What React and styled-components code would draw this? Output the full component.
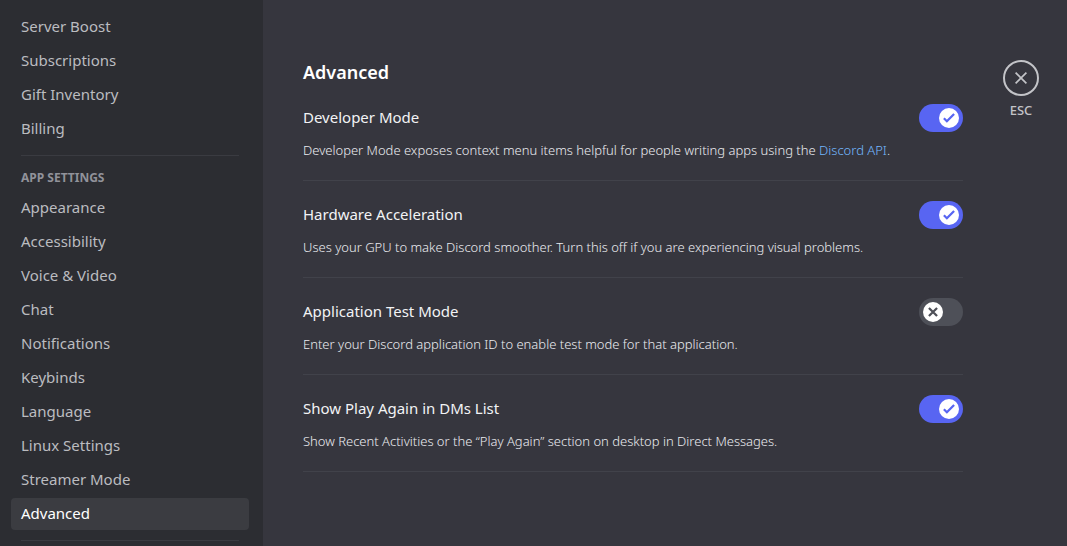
import { useState } from "react";
import styled, { createGlobalStyle } from "styled-components";

const GlobalStyle = createGlobalStyle`
  *,
  *::before,
  *::after {
    box-sizing: border-box;
  }

  body {
    margin: 0;
    background: #36363e;
    color: #f2f3f5;
    font-family: "Noto Sans", sans-serif;
    font-size: 15px;
    line-height: 20px;
  }
`;

const StyledSettings = styled.div`
  display: flex;
  min-height: 100vh;
`;

const Sidebar = styled.nav`
  flex: 0 0 263px;
  padding: 11px 14px 0 11px;
  background: #2c2d32;
`;

const NavList = styled.ul`
  display: flex;
  flex-direction: column;
  gap: 2px;
  margin: 0;
  padding: 0;
  list-style: none;
`;

const NavLink = styled.a`
  display: block;
  padding: 5px 10px 7px;
  border-radius: 4px;
  background: ${(props) => (props.$active ? "#3b3c41" : "transparent")};
  color: ${(props) => (props.$active ? "#ffffff" : "#bbbcc0")};
  text-decoration: none;
`;

const NavSeparator = styled.hr`
  height: 1px;
  margin: 10px 10px 0;
  border: 0;
  background: #3a3b41;
`;

const NavHeading = styled.h2`
  margin: 0;
  padding: 14px 10px 6px;
  color: #91929a;
  font-size: 12px;
  font-weight: 700;
  line-height: 16px;
  text-transform: uppercase;
`;

const Content = styled.main`
  display: flex;
  flex: 1;
  gap: 40px;
  align-items: flex-start;
  padding: 60px 28px 40px 40px;
`;

const Column = styled.section`
  flex: 1;
  min-width: 0;
  max-width: 740px;
`;

const Title = styled.h1`
  margin: 0 0 20px;
  color: #ffffff;
  font-size: 18px;
  font-weight: 600;
  line-height: 24px;
`;

const StyledSetting = styled.div`
  margin-bottom: 20px;
  border-bottom: 1px solid #41424a;
`;

const SettingRow = styled.div`
  display: flex;
  align-items: flex-start;
  justify-content: space-between;
`;

const SettingLabel = styled.label`
  line-height: 26px;
`;

const Note = styled.p`
  margin: 0;
  padding: 8px 0 20px;
  color: #ebecf0;
  font-size: 13px;
  font-weight: 300;
`;

const NoteLink = styled.a`
  color: #74b8ff;
  text-decoration: none;
`;

const Track = styled.span`
  position: relative;
  display: flex;
  flex: none;
  justify-content: ${(props) => (props.$on ? "flex-end" : "flex-start")};
  width: 44px;
  height: 28px;
  padding: 4px;
  border-radius: 14px;
  background: ${(props) => (props.$on ? "#5865f2" : "#4e5058")};
`;

const SwitchInput = styled.input`
  position: absolute;
  inset: 0;
  width: 100%;
  height: 100%;
  margin: 0;
  opacity: 0;
  cursor: pointer;
`;

const Knob = styled.svg`
  width: 20px;
  height: 20px;
  border-radius: 10px;
  background: #ffffff;
  color: ${(props) => (props.$on ? "#5865f2" : "#4e5058")};
`;

const CloseButton = styled.button`
  display: flex;
  flex: none;
  flex-direction: column;
  gap: 6px;
  align-items: center;
  width: 36px;
  padding: 0;
  border: 0;
  background: none;
  color: #c3c4c8;
  font: inherit;
  font-size: 13px;
  font-weight: 500;
  line-height: 16px;
  cursor: pointer;
`;

const CloseCircle = styled.span`
  display: grid;
  place-items: center;
  width: 36px;
  height: 36px;
  border: 2px solid currentColor;
  border-radius: 50%;
`;

const accountLinks = ["Server Boost", "Subscriptions", "Gift Inventory", "Billing"];

const appLinks = [
  "Appearance",
  "Accessibility",
  "Voice & Video",
  "Chat",
  "Notifications",
  "Keybinds",
  "Language",
  "Linux Settings",
  "Streamer Mode",
  "Advanced",
];

const settings = [
  {
    id: "developer-mode",
    label: "Developer Mode",
    note: (
      <>
        Developer Mode exposes context menu items helpful for people writing
        apps using the <NoteLink href="#api">Discord API</NoteLink>.
      </>
    ),
    enabled: true,
  },
  {
    id: "hardware-acceleration",
    label: "Hardware Acceleration",
    note: "Uses your GPU to make Discord smoother. Turn this off if you are experiencing visual problems.",
    enabled: true,
  },
  {
    id: "test-mode",
    label: "Application Test Mode",
    note: "Enter your Discord application ID to enable test mode for that application.",
    enabled: false,
  },
  {
    id: "play-again",
    label: "Show Play Again in DMs List",
    note: "Show Recent Activities or the “Play Again” section on desktop in Direct Messages.",
    enabled: true,
  },
];

function NavGroup({ links, active }) {
  return (
    <NavList>
      {links.map((link) => (
        <li key={link}>
          <NavLink
            href="#settings"
            $active={link === active}
            aria-current={link === active ? "page" : undefined}
          >
            {link}
          </NavLink>
        </li>
      ))}
    </NavList>
  );
}

function Switch({ id, checked, onChange }) {
  return (
    <Track $on={checked}>
      <Knob $on={checked} viewBox="0 0 20 20" fill="currentColor" aria-hidden="true">
        {checked ? (
          <path d="M7.89561 14.8538L6.30462 13.2629L14.3099 5.25755L15.9009 6.84854L7.89561 14.8538ZM4.08643 11.0903L5.67742 9.49929L9.4485 13.2704L7.85751 14.8614L4.08643 11.0903Z" />
        ) : (
          <path d="M5.13231 6.72963L6.7233 5.13864L14.855 13.2704L13.264 14.8614L5.13231 6.72963ZM13.2704 5.13864L14.8614 6.72963L6.72963 14.8614L5.13864 13.2704L13.2704 5.13864Z" />
        )}
      </Knob>
      <SwitchInput
        id={id}
        type="checkbox"
        role="switch"
        checked={checked}
        onChange={(e) => onChange(e.target.checked)}
      />
    </Track>
  );
}

function Setting({ id, label, note, enabled }) {
  const [checked, setChecked] = useState(enabled);

  return (
    <StyledSetting>
      <SettingRow>
        <SettingLabel htmlFor={id}>{label}</SettingLabel>
        <Switch id={id} checked={checked} onChange={setChecked} />
      </SettingRow>
      <Note>{note}</Note>
    </StyledSetting>
  );
}

function App() {
  return (
    <>
      <GlobalStyle />
      <StyledSettings>
        <Sidebar>
          <NavGroup links={accountLinks} />
          <NavSeparator />
          <NavHeading>App Settings</NavHeading>
          <NavGroup links={appLinks} active="Advanced" />
          <NavSeparator />
        </Sidebar>
        <Content>
          <Column>
            <Title>Advanced</Title>
            {settings.map((setting) => (
              <Setting key={setting.id} {...setting} />
            ))}
          </Column>
          <CloseButton type="button">
            <CloseCircle>
              <svg width="18" height="18" viewBox="0 0 24 24" fill="currentColor" aria-hidden="true">
                <path d="M18.4 4L12 10.4L5.6 4L4 5.6L10.4 12L4 18.4L5.6 20L12 13.6L18.4 20L20 18.4L13.6 12L20 5.6L18.4 4Z" />
              </svg>
            </CloseCircle>
            ESC
          </CloseButton>
        </Content>
      </StyledSettings>
    </>
  );
}

export default App;
